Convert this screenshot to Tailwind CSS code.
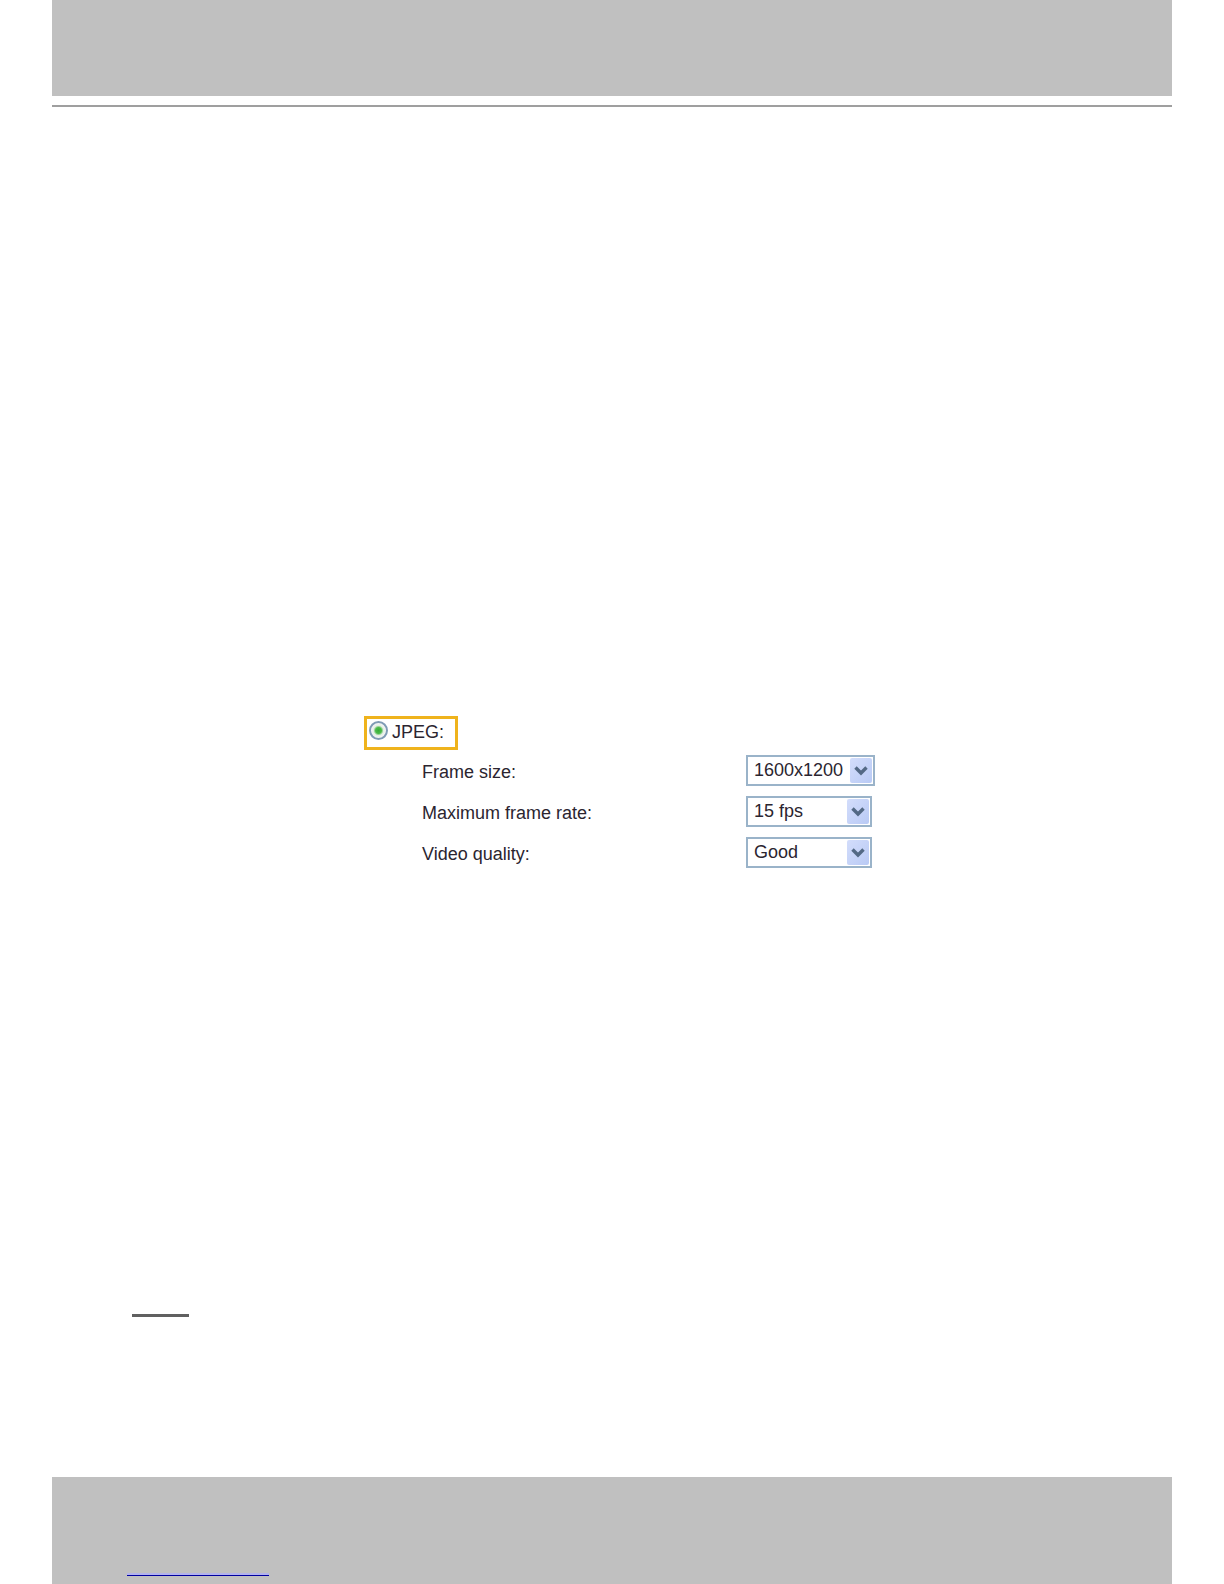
<!DOCTYPE html>
<html lang="en">
<head>
<meta charset="utf-8">
<meta name="viewport" content="width=device-width, initial-scale=1">
<title>JPEG video settings</title>
<script src="https://cdn.jsdelivr.net/npm/@tailwindcss/browser@4"></script>
</head>
<body class="flex min-h-screen flex-col bg-white px-[52px] font-['Liberation_Sans',Arial,sans-serif] text-[18px] text-[#2b2530]">
  <header class="border-b-2 border-[#9f9f9f] pb-[9px]">
    <div class="h-24 bg-[#c0c0c0]"></div>
  </header>

  <main class="flex-1 pt-[609px]">
    <form class="ml-[312px]">
      <label class="flex h-[34px] w-[94px] items-start gap-1 border-3 border-[#efb31c] pt-0.5 pl-0.5 leading-[22px]">
        <input type="radio" name="codec" checked class="size-[19px] shrink-0 appearance-none rounded-full border-2 border-[#7f9bb5] bg-[radial-gradient(circle,#35ad35_0,#4dbb4a_3px,#e3eee3_5px,#f3f5f3_7px)]">
        <span>JPEG:</span>
      </label>

      <div class="mt-[5px] ml-[58px] grid grid-cols-[324px_max-content] gap-y-2.5">
        <label for="size" class="h-[31px] leading-[35px]">Frame size:</label>
        <div class="relative w-[129px]">
          <select id="size" class="block h-[31px] w-full appearance-none border-2 border-[#9ab3c9] bg-white pl-1.5 leading-[27px]">
            <option>1600x1200</option>
          </select>
          <svg class="pointer-events-none absolute top-[3px] right-[3px] h-[25px] w-[22px]" viewBox="0 0 22 25" aria-hidden="true">
            <defs>
              <linearGradient id="face" x1="0" y1="0" x2="1" y2="1">
                <stop offset="0" stop-color="#d3ddfb"/>
                <stop offset="1" stop-color="#b9caf5"/>
              </linearGradient>
            </defs>
            <rect width="22" height="25" rx="2" fill="url(#face)"/>
            <path d="M5.5 9.5 11 15 16.5 9.5" fill="none" stroke="#536985" stroke-width="3.4"/>
          </svg>
        </div>

        <label for="rate" class="h-[31px] leading-[35px]">Maximum frame rate:</label>
        <div class="relative w-[126px]">
          <select id="rate" class="block h-[31px] w-full appearance-none border-2 border-[#9ab3c9] bg-white pl-1.5 leading-[27px]">
            <option>15 fps</option>
          </select>
          <svg class="pointer-events-none absolute top-[3px] right-[3px] h-[25px] w-[22px]" viewBox="0 0 22 25" aria-hidden="true">
            <rect width="22" height="25" rx="2" fill="url(#face)"/>
            <path d="M5.5 9.5 11 15 16.5 9.5" fill="none" stroke="#536985" stroke-width="3.4"/>
          </svg>
        </div>

        <label for="quality" class="h-[31px] leading-[35px]">Video quality:</label>
        <div class="relative w-[126px]">
          <select id="quality" class="block h-[31px] w-full appearance-none border-2 border-[#9ab3c9] bg-white pl-1.5 leading-[27px]">
            <option>Good</option>
          </select>
          <svg class="pointer-events-none absolute top-[3px] right-[3px] h-[25px] w-[22px]" viewBox="0 0 22 25" aria-hidden="true">
            <rect width="22" height="25" rx="2" fill="url(#face)"/>
            <path d="M5.5 9.5 11 15 16.5 9.5" fill="none" stroke="#536985" stroke-width="3.4"/>
          </svg>
        </div>
      </div>
    </form>
    <hr class="mt-[446px] ml-20 w-[57px] border-t-3 border-[#606060]">
  </main>

  <footer class="flex h-[107px] items-end bg-[#c0c0c0] pb-2 pl-[75px]">
    <a href="#" class="block h-[3px] w-[142px] border-b border-[#0000a0] bg-[#b3b3ec]"></a>
  </footer>
</body>
</html>
